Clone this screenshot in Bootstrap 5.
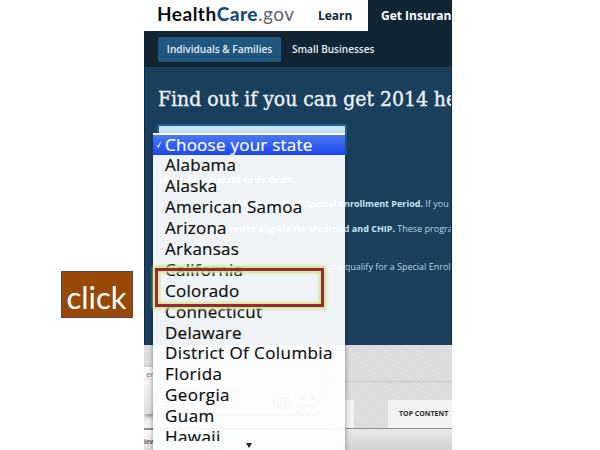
<!DOCTYPE html>
<html lang="en">
<head>
<meta charset="utf-8">
<meta name="viewport" content="width=device-width, initial-scale=1">
<title>HealthCare.gov - choose your state</title>
<link href="https://cdn.jsdelivr.net/npm/bootstrap@5.3.0/dist/css/bootstrap.min.css" rel="stylesheet">
<style>
body{width:600px;height:450px;overflow:hidden;background:#fff;font-family:"Open Sans",sans-serif;white-space:nowrap}
.shot{width:308px;height:450px;margin-left:144px}
.topbar{height:31px;background:#132532}
.brand-side{width:224px;background:#fff;color:#132532}
.logo{font:700 19px/28px Lato,sans-serif;letter-spacing:.5px;color:#0d0e10;padding-left:13px;width:158px}
.logo b{color:#154b7b}
.logo i{font-style:normal;font-weight:400;color:#5d646c}
.toplink{font-size:12px;font-weight:700;line-height:32px}
.subnav{height:36px;background:#132532;color:#e7edf2;font-size:10px;font-weight:600;letter-spacing:.02px;padding-left:14px}
.pill{width:123px;height:25px;background:#21567f;line-height:25px;border-radius:2px}
.main-area{height:278px;background:#1a405d;border-left:1px solid #10294f;border-right:1px solid #10294f;color:#b5d3e4;font-size:9px}
.headline{font:21px/28px "DejaVu Serif Condensed","DejaVu Serif",serif;font-stretch:condensed;letter-spacing:-.03px;-webkit-text-stroke:.3px;color:#f1f6fa;padding:18px 0 0 13px;height:57px}
.picker{height:31px;width:190px;margin-left:12px;background:#cae6f9;border:2px solid #235f91}
.note{height:14px;line-height:14px}
.note b{color:#c9e6f3}
.lower{height:105px;background:repeating-linear-gradient(45deg,#d9d9d9 0 1px,#dedede 1px 3px)}
.rule-row{height:37px;border-bottom:1px solid #c8c8c8}
.tab-row{height:47px;border-bottom:1px solid #8f8f8f}
.tab-box{height:28px;background:#f1f1f1;font-size:7px;font-weight:700;line-height:28px;color:#2c2c2c}
.foot{height:21px;background:linear-gradient(#e8e8e8,#d2d2d2)}
.window-edge{left:0;top:367px;width:176px;height:47px;background:linear-gradient(#fafafa 0 11px,#ddd 12px,#f3f3f3 14px,#ddd);box-shadow:0 2px 5px #888;font:8px/16px "Liberation Sans",sans-serif;color:#777}
.window-foot{left:0;top:429px;width:190px;height:21px;border-top:1px solid #888;background:linear-gradient(#fff,#ddd);font:bold 7px/24px "Liberation Sans",sans-serif;color:#555}
.state-menu{left:9px;top:133px;width:192px;height:317px;background:rgba(252,254,255,.945);border-top:1px solid #fff;box-shadow:0 2px 5px rgba(0,0,0,.4);font:17px/20.9px "Open Sans",sans-serif;color:#0c0c0c;-webkit-text-stroke:.2px;letter-spacing:.25px;padding-top:.5px}
.states{height:306px;overflow:hidden}
.state{height:20.9px;padding-left:12px}
.state:nth-child(n+11){letter-spacing:.42px}
.chosen{background:linear-gradient(#4b78f3,#1b47ee);color:#fff}
.tick{left:3px;top:7px}
.more{left:93px;top:309px}
.ring{left:11px;top:268px;width:169px;height:39px;border:3px solid #982b32;box-shadow:0 0 3px 2px #c8df83,inset 0 0 3px 2px #d0e59a}
.click-tag{left:61px;top:271px;width:72px;height:47px;background:#984807;border:1px solid #62413e;color:#fff;font:31px/50px Lato,sans-serif;padding-right:1px}
</style>
</head>
<body class="position-relative">
<main class="shot position-relative overflow-hidden">
  <header class="topbar d-flex">
    <div class="brand-side d-flex flex-shrink-0"><div class="logo">Health<b>Care</b><i>.gov</i></div><span class="toplink ms-3">Learn</span></div>
    <span class="toplink text-white" style="padding-left:13px">Get Insurance</span>
  </header>
  <nav class="subnav d-flex align-items-center"><span class="pill text-center">Individuals &amp; Families</span><span style="padding-left:11px">Small Businesses</span></nav>
  <section class="main-area overflow-hidden">
    <h1 class="headline m-0">Find out if you can get 2014 health coverage</h1>
    <div class="picker"></div>
    <div class="note" style="margin:18px 0 0 14px"><b class="text-white">What do you want to do first?</b></div>
    <div class="note" style="margin:10px 0 0 24px"><b class="d-inline-block text-end" style="width:254px">See if you qualify for a Special Enrollment Period.</b> If you</div>
    <div class="note" style="margin:11px 0 0 14px"><b class="d-inline-block text-end" style="width:236px">See if you’re eligible for Medicaid and CHIP.</b> These programs</div>
    <div class="note" style="margin:24px 0 0 182px">you qualify for a Special Enrollment</div>
  </section>
  <section class="lower">
    <div class="rule-row"></div>
    <div class="tab-row d-flex align-items-end"><div class="tab-box" style="width:210px"></div><div class="tab-box" style="width:64px;margin-left:34px;padding-left:11px">TOP CONTENT</div></div>
    <div class="foot"></div>
  </section>
  <div class="window-edge position-absolute overflow-hidden">&nbsp;er
    <svg class="position-absolute" style="left:8px;top:25px" width="168" height="22" fill="none" stroke="#999" stroke-width="2"><circle cx="12" cy="10" r="8"/><path d="M7 10h9M12 6l4 4-4 4"/><circle cx="130" cy="10" r="8"/><path d="M126 10a4 4 0 0 1 8-1m0-3v4h-4M134 11a4 4 0 0 1-8 1m0 3v-4h4M149 8V4h4M149 4l4 4M162 4h-4M162 4v4M162 4l-4 4M149 13v4h4M149 17l4-4M162 13v4h-4M162 17l-4-4"/></svg>
  </div>
  <div class="window-foot position-absolute">iew</div>
  <div class="state-menu position-absolute">
    <div class="states">
      <div class="state chosen">Choose your state</div><div class="state">Alabama</div><div class="state">Alaska</div><div class="state">American Samoa</div><div class="state">Arizona</div><div class="state">Arkansas</div><div class="state">California</div><div class="state">Colorado</div><div class="state">Connecticut</div><div class="state">Delaware</div><div class="state">District Of Columbia</div><div class="state">Florida</div><div class="state">Georgia</div><div class="state">Guam</div><div class="state">Hawaii</div>
    </div>
    <svg class="tick position-absolute" width="6" height="8"><path d="M1 4l1.3 2.5L4.5 1" fill="none" stroke="#fff"/></svg>
    <svg class="more position-absolute" width="6" height="5"><path d="M0 0h6L3 5z" fill="#222"/></svg>
  </div>
  <div class="ring position-absolute"></div>
</main>
<div class="click-tag position-absolute text-center">click</div>
<script src="https://cdn.jsdelivr.net/npm/bootstrap@5.3.0/dist/js/bootstrap.bundle.min.js"></script>
</body>
</html>
